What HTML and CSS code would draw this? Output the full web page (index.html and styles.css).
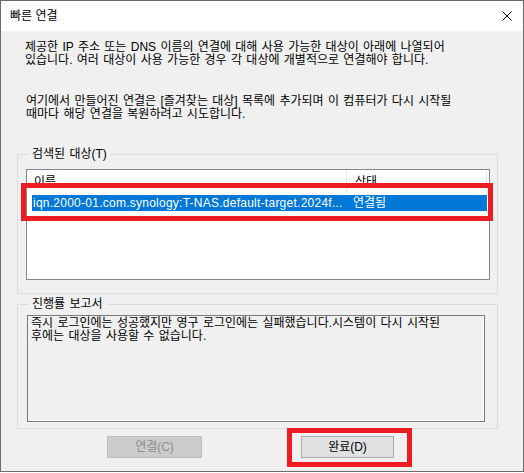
FILE: index.html
```html
<!DOCTYPE html>
<html lang="ko">
<head>
<meta charset="utf-8">
<title>빠른 연결</title>
<link rel="stylesheet" href="styles.css">
</head>
<body>
<div class="window">
  <div class="titlebar">
    <span class="title">빠른 연결</span>
    <svg class="close" width="10" height="10" viewBox="0 0 10 10"><path d="M0.5 0.5L9.5 9.5M9.5 0.5L0.5 9.5" stroke="#000" stroke-width="1" fill="none"/></svg>
  </div>
  <div class="content">
    <p class="para p1">제공한 IP 주소 또는 DNS 이름의 연결에 대해 사용 가능한 대상이 아래에 나열되어<br>있습니다. 여러 대상이 사용 가능한 경우 각 대상에 개별적으로 연결해야 합니다.</p>
    <p class="para p2">여기에서 만들어진 연결은 [즐겨찾는 대상] 목록에 추가되며 이 컴퓨터가 다시 시작될<br>때마다 해당 연결을 복원하려고 시도합니다.</p>

    <div class="group group-targets">
      <div class="legend">검색된 대상(T)</div>
      <div class="list">
        <div class="list-header">
          <div class="hcol hcol-name">이름</div>
          <div class="hcol hcol-state">상태</div>
        </div>
        <div class="list-row selected">
          <div class="cell cell-name">iqn.2000-01.com.synology:T-NAS.default-target.2024f...</div>
          <div class="cell cell-state">연결됨</div>
        </div>
        <div class="mark mark-row"></div>
      </div>
    </div>

    <div class="group group-report">
      <div class="legend">진행률 보고서</div>
      <div class="report">즉시 로그인에는 성공했지만 영구 로그인에는 실패했습니다.시스템이 다시 시작된<br>후에는 대상을 사용할 수 없습니다.</div>
    </div>

    <div class="buttons">
      <button class="btn btn-disabled" disabled>연결(C)</button>
      <span class="btn-wrap">
        <button class="btn btn-done">완료(D)</button>
        <span class="mark mark-btn"></span>
      </span>
    </div>
  </div>
</div>
</body>
</html>
```
FILE: styles.css
```css
* { box-sizing: border-box; }
html, body { margin: 0; padding: 0; background: #fff; }
body {
  font-family: "Liberation Sans", "Noto Sans CJK KR", sans-serif;
  font-size: 12px;
  line-height: 13px;
  color: #000;
}
.window {
  width: 524px;
  height: 472px;
  border: 1px solid #6b6b6b;
  display: flex;
  flex-direction: column;
}
.titlebar {
  height: 30px;
  background: #fff;
  display: flex;
  align-items: center;
  justify-content: space-between;
  padding: 0 11px 0 9px;
}
.title { font-size: 12px; }
.close { display: block; }
.content {
  flex: 1;
  background: #f0f0f0;
  padding: 10px 0 0 16px;
}
.para { margin: 0; white-space: nowrap; word-spacing: 1px; }
.p1 { margin-left: 8px; }
.p2 { margin-left: 9px; margin-top: 28px; }

.group {
  width: 481px;
  border: 1px solid #dcdcdc;
}
.group-targets {
  margin-top: 33px;
  padding: 0 7px 13px 8px;
}
.group-report {
  margin-top: 10px;
  padding: 0 12px 6px 9px;
}
.legend {
  display: table;
  margin: -7px 0 0 3px;
  padding: 0 3px;
  background: #f0f0f0;
  height: 13px;
  word-spacing: 1px;
}
.group-report .legend { margin-left: 2px; }

.list {
  position: relative;
  margin-top: 8px;
  height: 111px;
  background: #fff;
  border: 1px solid #828790;
}
.list-header {
  display: flex;
  height: 24px;
}
.hcol {
  display: flex;
  align-items: center;
  border-right: 1px solid #e5e5e5;
}
.hcol-name { width: 320px; padding-left: 7px; }
.hcol-state { width: 140px; padding-left: 8px; }
.list-row {
  display: flex;
  margin: 1px 0 0 5px;
  width: 455px;
  height: 16px;
  align-items: center;
  white-space: nowrap;
}
.selected { background: #0078d7; color: #fff; }
.cell-name { width: 315px; padding-left: 1px; letter-spacing: 0.25px; }
.cell-state { padding-left: 6px; }

.mark {
  position: absolute;
  border: 5px solid #ed1c24;
  pointer-events: none;
}
.mark-row {
  left: -6px;
  top: 13px;
  width: 472px;
  height: 38px;
}

.report {
  margin-top: 4px;
  height: 107px;
  border: 1px solid #7a7a7a;
  box-shadow: inset -1px -1px 0 #fff;
  background: #f0f0f0;
  padding: 1px 0 0 3px;
  white-space: nowrap;
  word-spacing: 1px;
}

.buttons {
  display: flex;
  gap: 99px;
  margin-top: 7px;
  padding-left: 90px;
}
.btn {
  height: 22px;
  font-family: inherit;
  font-size: 12px;
  line-height: 13px;
  padding: 0;
  margin: 0;
}
.btn-disabled {
  width: 95px;
  background: #cccccc;
  border: 1px solid #bfbfbf;
  color: #8d8d8d;
}
.btn-done {
  width: 93px;
  background: #e1e1e1;
  border: 1px solid #adadad;
  color: #000;
}
.btn-wrap {
  position: relative;
  display: block;
}
.mark-btn {
  left: -14px;
  top: -8px;
  width: 125px;
  height: 39px;
}
```
